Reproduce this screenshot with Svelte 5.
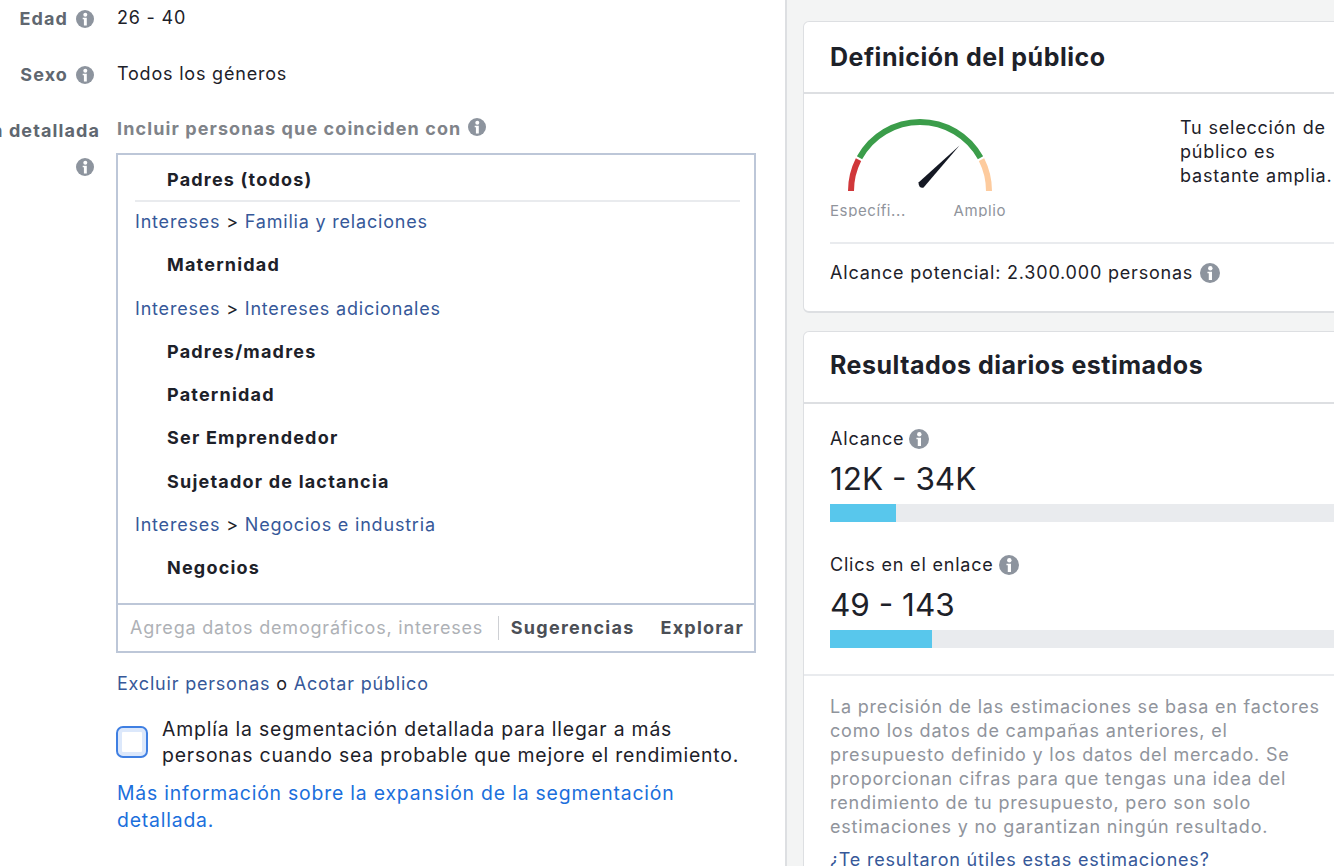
<script>
  const tokens = [
    { path: ['Familia y relaciones'], items: ['Maternidad'] },
    { path: ['Intereses adicionales'], items: ['Padres/madres', 'Paternidad', 'Ser Emprendedor', 'Sujetador de lactancia'] },
    { path: ['Negocios e industria'], items: ['Negocios'] }
  ];
  const results = [
    { label: 'Alcance', value: '12K - 34K', pct: 66 },
    { label: 'Clics en el enlace', value: '49 - 143', pct: 102 }
  ];
</script>

{#snippet info()}
  <svg class="info" viewBox="0 0 18 18" aria-hidden="true">
    <circle cx="9" cy="9" r="9" fill="#8d949e" />
    <circle cx="9.300" cy="4.800" r="2" fill="#fff" />
    <path d="M6.700 7.800h4.100v7.600H7.900V9.300H6.700z" fill="#fff" />
  </svg>
{/snippet}

<div class="page">
  <section class="form">
    <div class="row">
      <div class="label"><span>Edad</span>{@render info()}</div>
      <div class="value">26 - 40</div>
    </div>
    <div class="row">
      <div class="label"><span>Sexo</span>{@render info()}</div>
      <div class="value">Todos los géneros</div>
    </div>
    <div class="row detail">
      <div class="label stack">
        <span class="long">Segmentación detallada</span>
        {@render info()}
      </div>
      <div class="field">
        <div class="include">Incluir personas que coinciden con {@render info()}</div>
        <div class="box">
          <div class="list">
            <div class="token first">Padres (todos)</div>
            <div class="sep"></div>
            {#each tokens as group}
              <div class="path"><a href="#a">Intereses</a> &gt; <a href="#a">{group.path[0]}</a></div>
              {#each group.items as item}
                <div class="token">{item}</div>
              {/each}
            {/each}
          </div>
          <div class="inputbar">
            <span class="placeholder">Agrega datos demográficos, intereses</span>
            <span class="action sugg">Sugerencias</span>
            <span class="action">Explorar</span>
          </div>
        </div>
        <div class="more"><a href="#a">Excluir personas</a> o <a href="#a">Acotar público</a></div>
        <div class="expand">
          <span class="check"></span>
          <p>Amplía la segmentación detallada para llegar a más<br />personas cuando sea probable que mejore el rendimiento.</p>
        </div>
        <a class="learn" href="#a">Más información sobre la expansión de la segmentación<br />detallada.</a>
      </div>
    </div>
  </section>

  <aside class="side">
    <div class="card audience">
      <h2>Definición del público</h2>
      <div class="meter">
        <div class="gauge">
          <svg viewBox="0 -2 164 74" width="164" height="74" aria-hidden="true">
            <g fill="none" stroke-width="6">
              <path d="M21 71A69 69 0 0 1 28.500 39.700" stroke="#d0373a" />
              <path d="M29.500 37.800A69 69 0 0 1 150.500 37.800" stroke="#3b9d4a" />
              <path d="M151.500 39.700A69 69 0 0 1 159 71" stroke="#fdcb9e" />
            </g>
            <path d="M88.800 62.200L129.500 25.500L93.600 67.600A4 4 0 0 1 88.800 62.200Z" fill="#141823" />
          </svg>
          <div class="ends"><span>Específi...</span><span>Amplio</span></div>
        </div>
        <p>Tu selección de público es bastante amplia.</p>
      </div>
      <div class="reach"><span>Alcance potencial: 2.300.000 personas</span>{@render info()}</div>
    </div>

    <div class="card results">
      <h2>Resultados diarios estimados</h2>
      <div class="stats">
        {#each results as r}
          <div class="stat">
            <div class="stat-label"><span>{r.label}</span>{@render info()}</div>
            <div class="stat-value">{r.value}</div>
            <div class="bar"><div class="fill" style="width: {r.pct}px"></div></div>
          </div>
        {/each}
      </div>
      <div class="note">
        <p>La precisión de las estimaciones se basa en factores como los datos de campañas anteriores, el presupuesto definido y los datos del mercado. Se proporcionan cifras para que tengas una idea del rendimiento de tu presupuesto, pero son solo estimaciones y no garantizan ningún resultado.</p>
        <a href="#a">¿Te resultaron útiles estas estimaciones?</a>
      </div>
    </div>
  </aside>
</div>

<style>
  :global(body) {
    margin: 0;
    background: #fff;
    overflow: hidden;
  }

  .page {
    display: flex;
    height: 866px;
    overflow: hidden;
    font-family: Inter, "Liberation Sans", sans-serif;
    font-size: 18px;
    letter-spacing: 0.8px;
    line-height: 24px;
    color: #1d2129;
  }

  a {
    color: #365899;
    text-decoration: none;
  }

  .form {
    width: 785px;
    flex: none;
    padding-top: 5px;
    box-sizing: border-box;
  }

  .row {
    display: flex;
    gap: 17px;
    height: 56px;
  }

  .row.detail {
    height: auto;
  }

  .label {
    width: 100px;
    flex: none;
    display: flex;
    justify-content: flex-end;
    align-items: center;
    gap: 8px;
    height: 28px;
    padding-right: 6px;
    box-sizing: border-box;
    font-weight: 700;
    letter-spacing: 1.1px;
    color: #606770;
    white-space: nowrap;
  }

  .label.stack {
    flex-direction: column;
    align-items: flex-end;
    justify-content: flex-start;
    gap: 15px;
    height: auto;
    padding-top: 2px;
  }

  .label .long {
    margin-right: -6px;
  }

  .info {
    width: 18px;
    height: 18px;
    flex: none;
  }

  .value {
    padding-top: 1px;
  }

  .include {
    display: flex;
    align-items: center;
    gap: 7px;
    height: 36px;
    padding-bottom: 13px;
    box-sizing: border-box;
    font-weight: 700;
    letter-spacing: 1.1px;
    color: #7f8389;
  }

  .include .info {
    margin-top: -3px;
  }

  .box {
    width: 640px;
    height: 500px;
    margin-left: -1px;
    box-sizing: border-box;
    border: 2px solid #bdc7d8;
    display: flex;
    flex-direction: column;
  }

  .list {
    flex: 1;
    padding: 0 14px 0 17px;
  }

  .token {
    height: 43.25px;
    line-height: 40px;
    padding-left: 32px;
    font-weight: 700;
    letter-spacing: 1.2px;
  }

  .token.first {
    height: 45px;
    line-height: 50px;
  }

  .sep {
    height: 2px;
    background: #e9ebee;
  }

  .path {
    height: 43.25px;
    line-height: 39px;
  }

  .inputbar {
    height: 46px;
    border-top: 2px solid #bdc7d8;
    display: flex;
    align-items: center;
    padding: 0 10px 0 12px;
  }

  .placeholder {
    color: #aeb1b6;
    flex: 1;
    white-space: nowrap;
  }

  .action {
    font-weight: 700;
    letter-spacing: 1.25px;
    color: #4b4f56;
    white-space: nowrap;
  }

  .sugg {
    border-left: 1px solid #ced0d4;
    padding-left: 12px;
    margin-right: 26px;
  }

  .more {
    margin-top: 19px;
  }

  .expand {
    display: flex;
    align-items: center;
    gap: 14px;
    margin: 20px 0 0 -1px;
    font-size: 19.4px;
  }

  .expand p {
    margin: 0;
    line-height: 26px;
    white-space: nowrap;
  }

  .check {
    width: 32px;
    height: 32px;
    flex: none;
    box-sizing: border-box;
    border: 2.500px solid #3f7fe2;
    border-radius: 7px;
    background: #fff;
    box-shadow: inset 0 0 0 4px #dce8fb;
  }

  .learn {
    display: block;
    margin-top: 12px;
    line-height: 27px;
    color: #1b6fdc;
    font-size: 19.4px;
    white-space: nowrap;
  }

  .side {
    flex: 1;
    min-width: 0;
    background: #f3f4f4;
    border-left: 2px solid #dddfe2;
    padding: 21px 0 0 16px;
  }

  .card {
    width: 620px;
    background: #fff;
    border: 1px solid #dddfe2;
    border-bottom-width: 2px;
    border-radius: 6px;
    margin-bottom: 18px;
  }

  .audience {
    height: 292px;
    box-sizing: border-box;
  }

  h2 {
    margin: 0;
    height: 70px;
    padding: 0 26px;
    border-bottom: 2px solid #dddfe2;
    font-size: 25px;
    letter-spacing: 0.5px;
    line-height: 70px;
    font-weight: 700;
    color: #1d2129;
  }

  .results h2 {
    line-height: 66px;
  }

  .meter {
    display: flex;
    margin: 0 0 0 26px;
    height: 148px;
    width: 594px;
    border-bottom: 2px solid #e9ebee;
  }

  .gauge {
    width: 350px;
    flex: none;
    padding-top: 24px;
  }

  .gauge svg {
    display: block;
  }

  .ends {
    display: flex;
    width: 176px;
    justify-content: space-between;
    height: 18px;
    overflow: hidden;
    margin-top: 7px;
    font-size: 15px;
    letter-spacing: 0.6px;
    line-height: 24px;
    color: #90949c;
  }

  .meter p {
    margin: 22px 0 0;
    width: 158px;
  }

  .reach {
    display: flex;
    align-items: center;
    gap: 7px;
    margin: 17px 0 0 26px;
  }

  .reach .info,
  .stat-label .info {
    width: 20px;
    height: 20px;
  }

  .stats {
    padding: 23px 26px 0;
    height: 272px;
    box-sizing: border-box;
    border-bottom: 2px solid #e9ebee;
  }

  .stat {
    height: 126px;
  }

  .stat-label {
    display: flex;
    align-items: center;
    gap: 5px;
  }

  .stat-value {
    font-size: 31.5px;
    letter-spacing: 0;
    line-height: 44px;
    margin-top: 6px;
  }

  .bar {
    height: 18px;
    margin-top: 3px;
    background: #e9ebee;
  }

  .fill {
    height: 100%;
    background: #58c7ec;
  }

  .note {
    padding: 19px 26px 0;
    color: #90949c;
    width: 500px;
  }

  .note p {
    margin: 0 0 9px;
  }
</style>
